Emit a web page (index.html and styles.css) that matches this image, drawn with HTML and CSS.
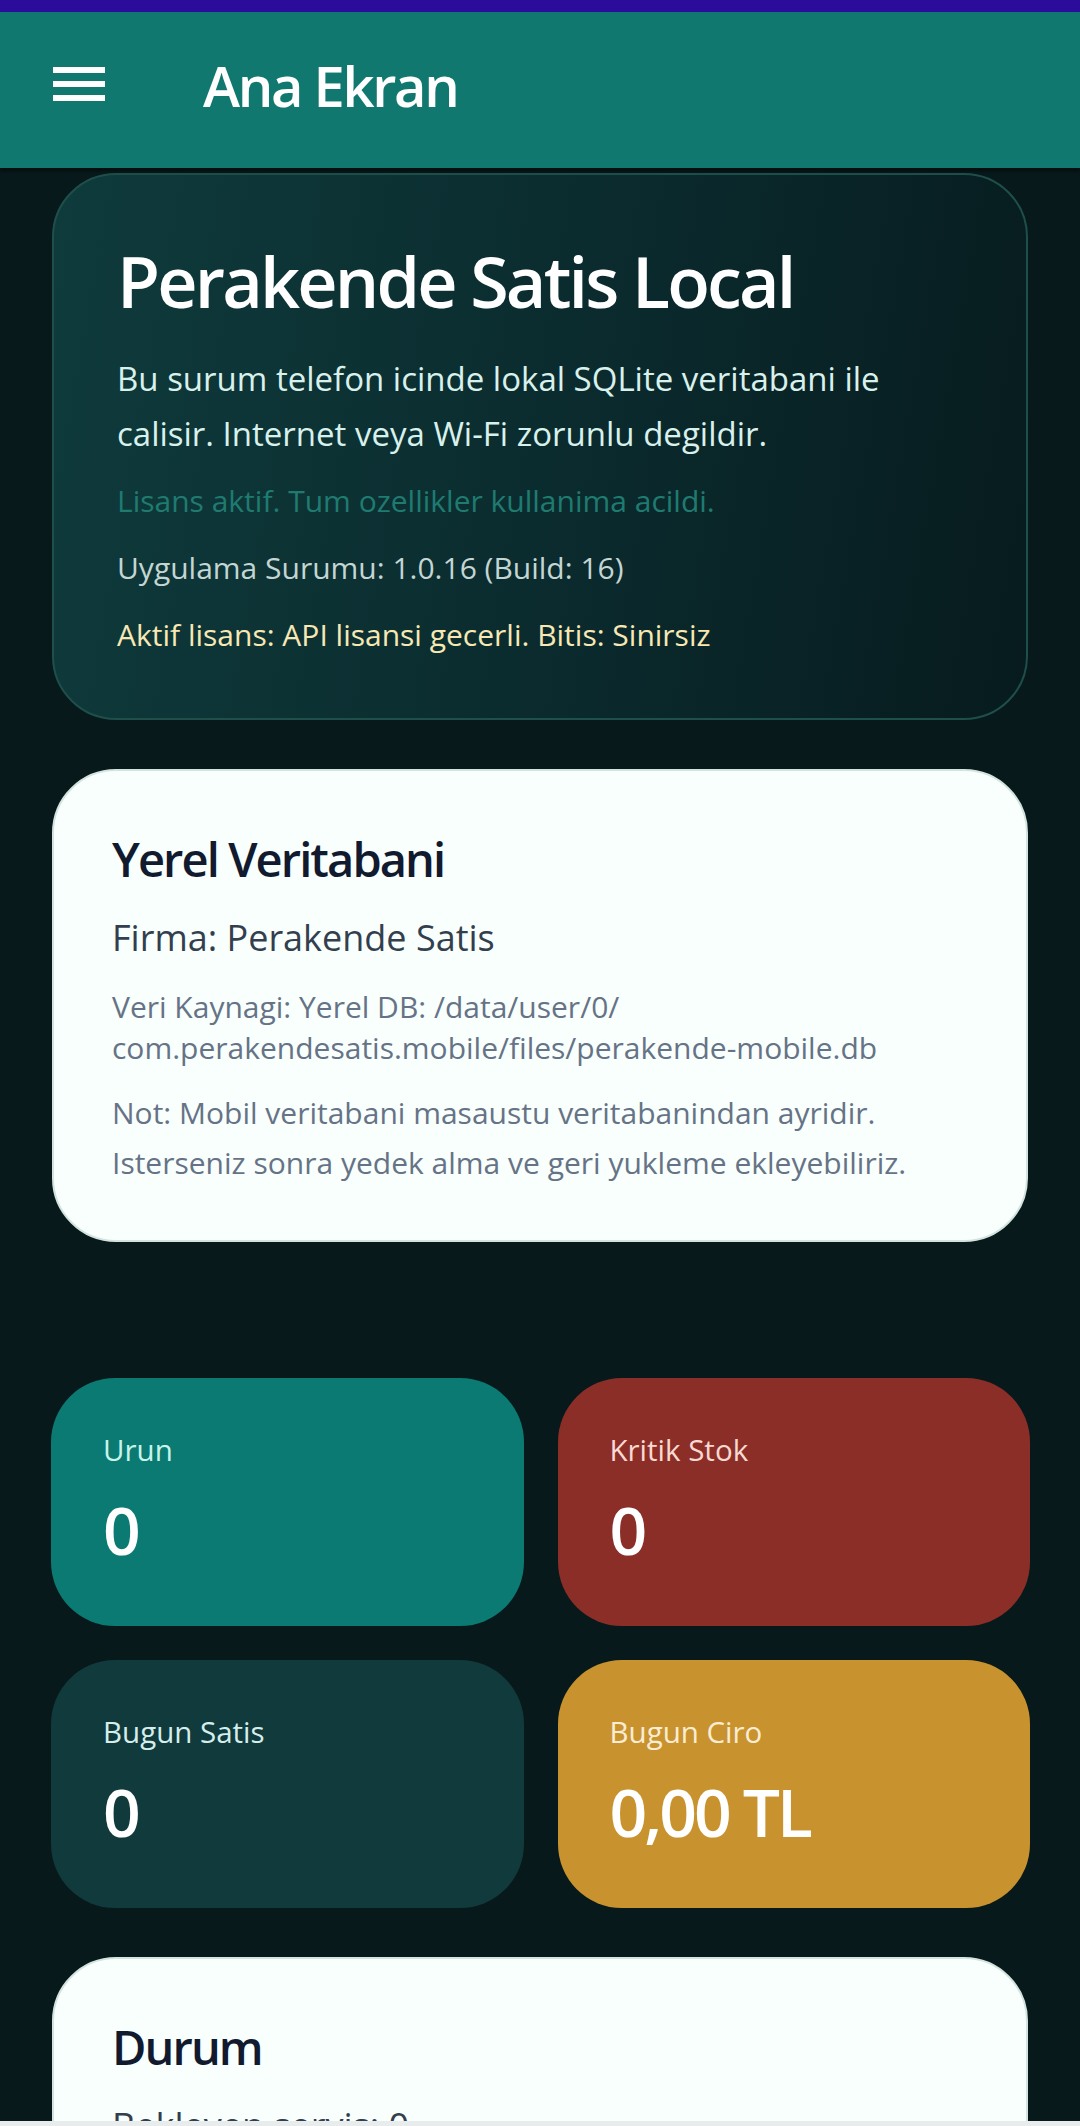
FILE: index.html
```html
<!DOCTYPE HTML>
<html>
<head>
    <title>Ana Ekran</title>
    <link rel="stylesheet" href="styles.css">
</head>
<body>
<div class="status_bar"></div>
<header class="app_bar">
    <svg class="menu_icon" width="52" height="36" viewBox="0 0 52 36">
        <rect x="0" y="1" width="52" height="6" fill="#fff"/>
        <rect x="0" y="15" width="52" height="6" fill="#fff"/>
        <rect x="0" y="29" width="52" height="6" fill="#fff"/>
    </svg>
    <h1>Ana Ekran</h1>
</header>
<main class="screen">
    <section class="hero">
        <h2>Perakende Satis Local</h2>
        <p class="hero-text">Bu surum telefon icinde lokal SQLite veritabani ile<br>calisir. Internet veya Wi-Fi zorunlu degildir.</p>
        <p class="line license-ok">Lisans aktif. Tum ozellikler kullanima acildi.</p>
        <p class="line version">Uygulama Surumu: 1.0.16 (Build: 16)</p>
        <p class="line license-info">Aktif lisans: API lisansi gecerli. Bitis: Sinirsiz</p>
    </section>

    <section class="panel db-panel">
        <h3>Yerel Veritabani</h3>
        <p class="panel-sub">Firma: Perakende Satis</p>
        <p class="panel-path">Veri Kaynagi: Yerel DB: /data/user/0/<br>com.perakendesatis.mobile/files/perakende-mobile.db</p>
        <p class="panel-note">Not: Mobil veritabani masaustu veritabanindan ayridir.<br>Isterseniz sonra yedek alma ve geri yukleme ekleyebiliriz.</p>
    </section>

    <div class="stats">
        <div class="stat stat-teal">
            <span class="stat-label">Urun</span>
            <span class="stat-value">0</span>
        </div>
        <div class="stat stat-red">
            <span class="stat-label">Kritik Stok</span>
            <span class="stat-value">0</span>
        </div>
        <div class="stat stat-dark">
            <span class="stat-label">Bugun Satis</span>
            <span class="stat-value">0</span>
        </div>
        <div class="stat stat-gold">
            <span class="stat-label">Bugun Ciro</span>
            <span class="stat-value">0,00 TL</span>
        </div>
    </div>

    <section class="panel">
        <h3>Durum</h3>
        <p class="panel-sub">Bekleyen servis: 0</p>
        <p class="panel-sub">Bekleyen senkron: 0</p>
    </section>
</main>
<div class="nav_strip"></div>
</body>
</html>
```

FILE: styles.css
```css
html, body {
    margin: 0;
    height: 100%;
}

body {
    display: flex;
    flex-direction: column;
    height: 2126px;
    overflow: hidden;
    background-color: #08191b;
    font-family: "Open Sans", "Noto Sans", sans-serif;
}

p, h1, h2, h3 {
    margin: 0;
}

.status_bar {
    height: 12px;
    flex-shrink: 0;
    background-color: #2b0c9b;
}

.app_bar {
    height: 156px;
    flex-shrink: 0;
    display: flex;
    align-items: center;
    padding-left: 53px;
    background-color: #10786f;
    box-shadow: 0 3px 3px rgba(0, 0, 0, 0.45);
    position: relative;
    z-index: 2;
}

.menu_icon {
    display: block;
    margin-top: -12px;
}

.app_bar h1 {
    margin-left: 98px;
    margin-top: -10px;
    font-size: 56px;
    font-weight: 600;
    letter-spacing: -2.3px;
    line-height: 70px;
    color: #fff;
}

.screen {
    flex: 1;
    overflow: hidden;
    padding: 5px 52px 0;
}

.hero {
    border: 2px solid #1f4f4b;
    border-radius: 64px;
    padding: 66px 63px 63px;
    background: linear-gradient(100deg, #0f3b3c 0%, #0b2c2f 50%, #071b1e 100%);
}

.hero h2 {
    font-size: 70px;
    font-weight: 600;
    letter-spacing: -2.8px;
    line-height: 80px;
    color: #fff;
}

.hero-text {
    margin-top: 30px;
    font-size: 33px;
    line-height: 55px;
    color: #d9f1ec;
}

.line {
    font-size: 30px;
    line-height: 40px;
    margin-top: 27px;
}

.license-ok {
    margin-top: 20px;
    color: #1f7b70;
}

.version {
    color: #c3d6d3;
}

.license-info {
    color: #f7e8b4;
}

.panel {
    margin-top: 49px;
    border: 2px solid #d3e4df;
    border-radius: 64px;
    padding: 57px 58px 52px;
    background-color: #f8fffd;
}

.panel h3 {
    font-size: 47px;
    font-weight: 600;
    letter-spacing: -1.9px;
    line-height: 62px;
    color: #111a2e;
}

.panel-sub {
    margin-top: 23px;
    font-size: 36px;
    line-height: 50px;
    color: #333f4e;
}

.panel-path {
    margin-top: 23px;
    font-size: 30px;
    line-height: 41px;
    color: #667386;
}

.panel-note {
    margin-top: 20px;
    font-size: 30px;
    line-height: 50px;
    color: #667386;
}

.stats {
    margin-top: 136px;
    display: grid;
    grid-template-columns: 1fr 1fr;
    gap: 34px 34px;
    margin-left: -1px;
    margin-right: -2px;
}

.stat {
    display: flex;
    flex-direction: column;
    border-radius: 64px;
    padding: 52px 52px 57px;
}

.stat-label {
    font-size: 29.5px;
    line-height: 40px;
}

.stat-value {
    margin-top: 19px;
    font-size: 66px;
    font-weight: 600;
    letter-spacing: -3px;
    line-height: 80px;
    color: #fff;
}

.stat-teal {
    background-color: #0b7a73;
}

.stat-teal .stat-label {
    color: #c8f4ea;
}

.stat-red {
    background-color: #8b2e27;
}

.stat-red .stat-label {
    color: #f9d9d3;
}

.stat-dark {
    background-color: #103a3c;
}

.stat-dark .stat-label {
    color: #d5eeec;
}

.stat-gold {
    background-color: #c8932e;
}

.stat-gold .stat-label {
    color: #fbecd4;
}

.nav_strip {
    height: 5px;
    flex-shrink: 0;
    background-color: #e9ecec;
}
```
